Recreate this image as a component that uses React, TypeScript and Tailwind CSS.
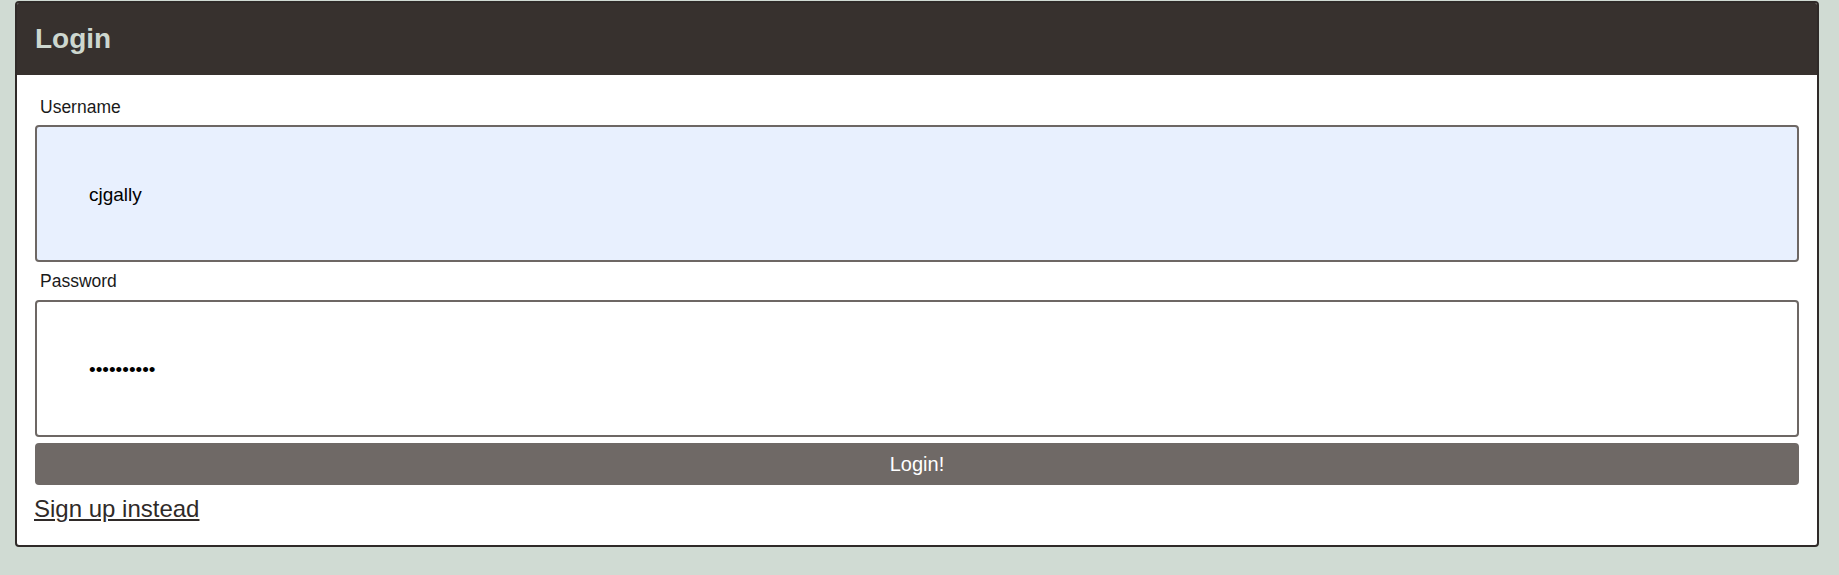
import React from "react";

export default function App() {
  return (
    <div
      className="min-h-screen w-full bg-[#d0dbd3] pt-px pl-[15px]"
      style={{ fontFamily: '"Liberation Sans", Arial, sans-serif' }}
    >
      <div className="w-[1804px] overflow-hidden rounded-[4px] border-2 border-[#2f2a28] bg-white">
        <div className="flex h-[72px] items-center bg-[#37312e] pl-[18px]">
          <h1 className="text-[28px] font-bold leading-[32px] text-[#cdd7cf]">Login</h1>
        </div>
        <div className="flex flex-col px-[18px] pt-[22px] pb-[22px]">
          <label className="ml-[5px] text-[17.5px] leading-[20px] text-[#1a1a1a]">Username</label>
          <input
            readOnly
            value="cjgally"
            className="mt-[8px] h-[137px] w-full rounded-[4px] border-2 border-[#6d6764] bg-[#e8f0fe] pt-[3px] pl-[52px] text-[19px] text-black outline-none"
            style={{ fontFamily: '"Liberation Sans", Arial, sans-serif' }}
          />
          <label className="mt-[9px] ml-[5px] text-[17.5px] leading-[20px] text-[#1a1a1a]">Password</label>
          <input
            readOnly
            type="password"
            value="abcdefghij"
            className="mt-[9px] h-[137px] w-full rounded-[4px] border-2 border-[#6d6764] bg-white pt-[2px] pl-[52px] text-[19px] text-black outline-none"
            style={{ fontFamily: '"Liberation Sans", Arial, sans-serif' }}
          />
          <button className="mt-[6px] flex h-[42px] w-full items-center justify-center rounded-[4px] bg-[#6f6966] text-[20px] text-white">
            Login!
          </button>
          <a
            href="#"
            className="mt-[10px] -ml-px self-start text-[24px] leading-[28px] text-[#2f2a28] underline"
          >
            Sign up instead
          </a>
        </div>
      </div>
    </div>
  );
}
